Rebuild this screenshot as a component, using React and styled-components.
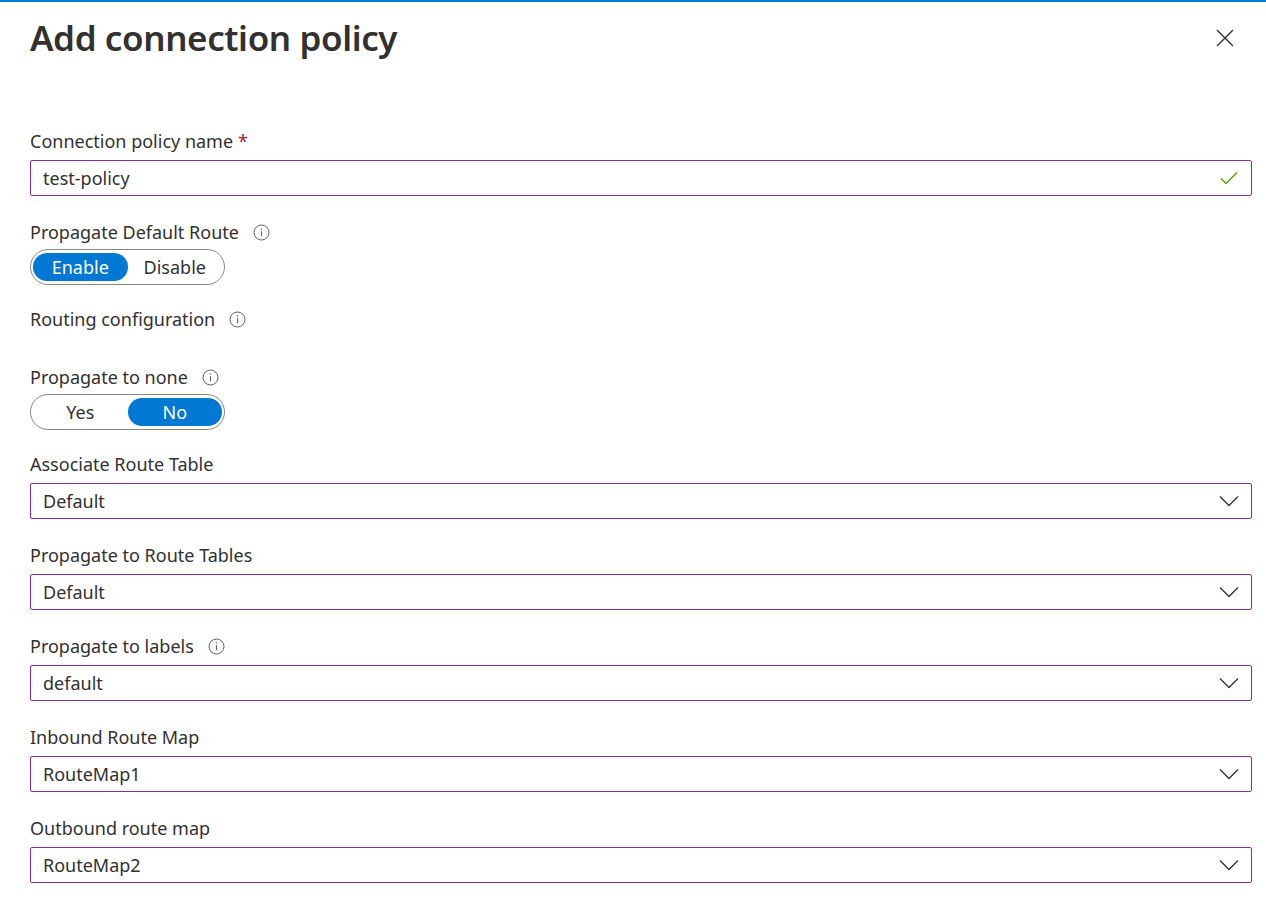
import styled, { createGlobalStyle } from "styled-components"

const textColor = "#323130"
const azureBlue = "#0078d4"
const fieldBorder = "#8a2da5"

const GlobalStyle = createGlobalStyle`
  html, body {
    margin: 0;
    padding: 0;
    background: #fff;
  }

  body {
    font-family: "Noto Sans", "Open Sans", sans-serif;
    color: ${textColor};
  }
`

const Panel = styled.div`
  border-top: 2px solid ${azureBlue};
  padding: 0 14px 0 30px;
  height: 916px;
  box-sizing: border-box;
`

const Header = styled.header`
  display: flex;
  align-items: center;
  justify-content: space-between;
  height: 72px;
  margin-bottom: 55px;
`

const Title = styled.h1`
  margin: 0;
  font-size: 35px;
  font-weight: 600;
  letter-spacing: -0.4px;
  line-height: 70px;
`

const CloseButton = styled.button`
  display: flex;
  align-items: center;
  justify-content: center;
  width: 32px;
  height: 32px;
  margin-right: 11px;
  padding: 0;
  border: none;
  background: none;
  cursor: pointer;
`

const Field = styled.div`
  display: flex;
  flex-direction: column;
  margin-bottom: ${p => p.$gap ?? 24}px;
`

const Label = styled.label`
  display: flex;
  align-items: center;
  gap: 14px;
  height: 25px;
  font-size: 18px;
  line-height: 25px;
  margin-bottom: ${p => p.$gap ?? 6}px;
`

const Required = styled.span`
  color: #a4262c;
  margin-left: -9px;
`

const InfoIcon = () => (
  <svg width="17" height="17" viewBox="0 0 17 17" fill="none">
    <circle cx="8.5" cy="8.5" r="7.5" stroke="#605e5c" strokeWidth="1" />
    <line x1="8.5" y1="7.2" x2="8.5" y2="12.2" stroke="#605e5c" strokeWidth="1.1" />
    <circle cx="8.5" cy="5" r="0.75" fill="#605e5c" />
  </svg>
)

const Box = styled.div`
  display: flex;
  align-items: center;
  justify-content: space-between;
  height: 36px;
  box-sizing: border-box;
  border: 1px solid ${fieldBorder};
  border-radius: 2px;
  padding: 0 12px 0 12px;
  font-size: 18px;
  cursor: ${p => (p.$select ? "pointer" : "text")};
`

const Toggle = styled.div`
  display: grid;
  grid-template-columns: 1fr 1fr;
  width: 195px;
  height: 36px;
  box-sizing: border-box;
  border: 1px solid #8a8886;
  border-radius: 18px;
  padding: 3px 2px;
`

const ToggleOption = styled.span`
  display: flex;
  align-items: center;
  justify-content: center;
  border-radius: 14px;
  font-size: 18px;
  background: ${p => (p.$active ? azureBlue : "transparent")};
  color: ${p => (p.$active ? "#fff" : textColor)};
`

const Check = () => (
  <svg width="20" height="16" viewBox="0 0 20 16" fill="none">
    <path d="M2 8.5 L7 13.5 L18 2.5" stroke="#57a300" strokeWidth="1.5" />
  </svg>
)

const Chevron = () => (
  <svg width="20" height="12" viewBox="0 0 20 12" fill="none">
    <path d="M1 1.5 L10 10.5 L19 1.5" stroke="#323130" strokeWidth="1.3" />
  </svg>
)

const SelectField = ({ label, value, info }) => (
  <Field>
    <Label>
      {label}
      {info && <InfoIcon />}
    </Label>
    <Box $select>
      {value}
      <Chevron />
    </Box>
  </Field>
)

const ToggleField = ({ label, options, active }) => (
  <Field $gap={22}>
    <Label $gap={4}>
      {label}
      <InfoIcon />
    </Label>
    <Toggle>
      {options.map(o => (
        <ToggleOption key={o} $active={o === active}>
          {o}
        </ToggleOption>
      ))}
    </Toggle>
  </Field>
)

export default function App() {
  return (
    <>
      <GlobalStyle />
      <Panel>
        <Header>
          <Title>Add connection policy</Title>
          <CloseButton aria-label="Close">
            <svg width="20" height="20" viewBox="0 0 20 20">
              <path d="M2 2 L18 18 M18 2 L2 18" stroke="#323130" strokeWidth="1.4" />
            </svg>
          </CloseButton>
        </Header>

        <Field>
          <Label>
            Connection policy name <Required>*</Required>
          </Label>
          <Box>
            test-policy
            <Check />
          </Box>
        </Field>

        <ToggleField label="Propagate Default Route" options={["Enable", "Disable"]} active="Enable" />

        <Field $gap={33}>
          <Label $gap={0}>
            Routing configuration
            <InfoIcon />
          </Label>
        </Field>

        <ToggleField label="Propagate to none" options={["Yes", "No"]} active="No" />

        <SelectField label="Associate Route Table" value="Default" />
        <SelectField label="Propagate to Route Tables" value="Default" />
        <SelectField label="Propagate to labels" value="default" info />
        <SelectField label="Inbound Route Map" value="RouteMap1" />
        <SelectField label="Outbound route map" value="RouteMap2" />
      </Panel>
    </>
  )
}
